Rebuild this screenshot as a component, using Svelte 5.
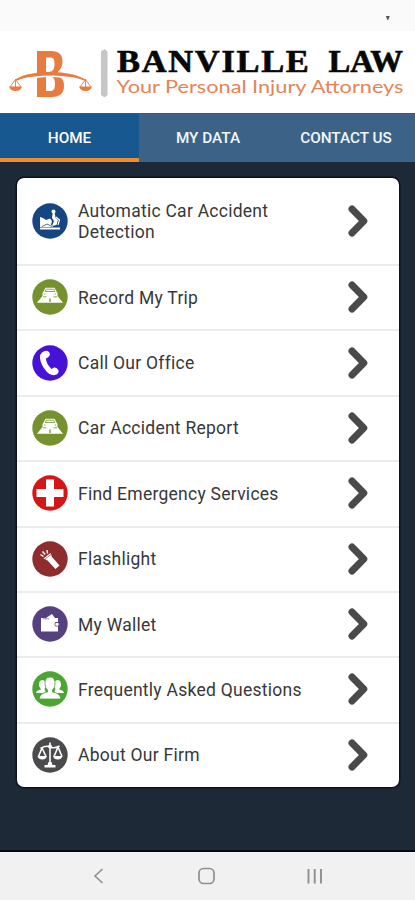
<script>
  const items = [
    { icon: 'crash', color: '#164583', label: 'Automatic Car Accident Detection' },
    { icon: 'car', color: '#75922f', label: 'Record My Trip' },
    { icon: 'phone', color: '#4712d6', label: 'Call Our Office' },
    { icon: 'car', color: '#75922f', label: 'Car Accident Report' },
    { icon: 'cross', color: '#d31616', label: 'Find Emergency Services' },
    { icon: 'torch', color: '#8e2d2d', label: 'Flashlight' },
    { icon: 'wallet', color: '#57407f', label: 'My Wallet' },
    { icon: 'people', color: '#4aa532', label: 'Frequently Asked Questions' },
    { icon: 'scales', color: '#4b4b4d', label: 'About Our Firm' },
  ];
  const tabs = ['HOME', 'MY DATA', 'CONTACT US'];
  let active = $state(0);
</script>

<div class="screen">
  <div class="status">
    <svg width="6" height="6" viewBox="0 0 6 6"><path d="M.8 1h4L3.2 5H2.4z" fill="#555" /></svg>
  </div>

  <header>
    <svg width="415" height="82" viewBox="0 31 415 82" role="img" aria-label="Banville Law">
      <path fill="#e87b40" fill-rule="evenodd" d="M37 51H51C59 51 62.500 55 62.500 61.500C62.500 66 61 69 58 71.500V74H37ZM46 57.500V72H50C53.500 71 54.500 68 54.500 64C54.500 59.500 53.500 57.500 50 57.500Z" />
      <path fill="#e87b40" fill-rule="evenodd" d="M37 77H60C63 79 64 82 64 86C64 93 60 97 52 97H37ZM46 77V91H50C54 91 55 88.500 55 84C55 80 54 77 51 77Z" />
      <path fill="#fff" d="M36 76.500Q50 74.500 64 76.500V78Q50 76 36 78Z" />
      <path fill="#e87b40" d="M15 80Q18 77 27 74.500Q50 69 73 74.500Q82 77 86 80L84 80.500Q76 77 66 76.500Q50 74.500 35 76.500Q25 77 17 80.500Z" />
      <g fill="none" stroke="#e87b40" stroke-width=".9">
        <path d="M15.500 79.500L10 87M15.500 79.500L21 87M15.500 79V87M85.500 79.500L80 87M85.500 79.500L91 87M85.500 79V87" />
      </g>
      <path fill="#e87b40" d="M9 86.500H22Q20.500 91 15.500 91Q10.500 91 9 86.500ZM79 86.500H92Q90.500 91 85.500 91Q80.500 91 79 86.500Z" />
      <path fill="#c6c6c6" d="M101 51.500L104.500 49L107.500 51.500V95L104.500 97.500L101 95Z" />
      <g class="name">
        <text class="spaced" x="117" y="72" textLength="193.500" lengthAdjust="spacingAndGlyphs">BANVILLE</text>
        <text x="328.500" y="72" textLength="74.500" lengthAdjust="spacingAndGlyphs">LAW</text>
      </g>
      <text class="tagline" x="116.500" y="93.300" textLength="287" lengthAdjust="spacingAndGlyphs">Your Personal Injury Attorneys</text>
    </svg>
  </header>

  <nav class="tabs">
    {#each tabs as tab, i}
      <button class:active={active === i} onclick={() => (active = i)}>{tab}</button>
    {/each}
  </nav>

  <main>
    <ul>
      {#each items as item}
        <li>
          <svg class="badge" viewBox="0 0 36 36" width="36" height="36">
            <circle cx="18" cy="18" r="17.700" fill={item.color} />
            {#if item.icon === 'crash'}
              <g fill="#fff">
                <path d="M8 14L11 15L14 17L18 15.500L20 18L19 21.500L21 24H8Z" />
                <circle cx="21.500" cy="8.500" r="2" />
                <path d="M20.700 10L22.700 10L23.500 14.500L26 17L24.500 22L20 23L22 18L20 15Z" />
                <path d="M8 24.500H28V26.500H8Z" />
              </g>
              <path d="M24 14L27.500 17L26 22" fill="none" stroke="#fff" stroke-width="1.200" />
              <path d="M10 23.500L15 21L20 23.500" fill="none" stroke={item.color} stroke-width=".8" />
            {:else if item.icon === 'car'}
              <path fill="#fff" d="M13.500 8.700H22.500L24.500 12.500L25.500 14V17L31 23.700H5L10.500 17V14L11.500 12.500Z" />
              <path fill="none" stroke={item.color} stroke-width=".8" d="M14.300 10.200H21.700L22.800 12.500H13.200ZM12 15H13.500M22.500 15H24M11 17.800H14.500M21.500 17.800H25" />
              <path d="M18 19.500V23" stroke={item.color} stroke-width="1.300" />
            {:else if item.icon === 'phone'}
              <path fill="#fff" d="M10 7.500Q14 4.500 17 7Q19 9.500 16.500 12L14 13.500Q14 18.500 19.500 24L22 22.500Q25 22 26.500 25.500Q27 28.500 24 29.800Q19.500 31.500 14.500 26.500Q8.500 19.500 8 13Q7.800 9 10 7.500Z" />
            {:else if item.icon === 'cross'}
              <path fill="#fff" d="M14 4.500H22V14H31.500V22H22V31.500H14V22H4.500V14H14Z" />
            {:else if item.icon === 'torch'}
              <path fill="#fff" d="M11.500 17.500L18.500 12L20 16L27.500 24.500L23.500 28L15.500 19.500Z" />
              <path stroke="#fff" stroke-width="1.500" d="M11.500 15.500L8.500 13.500M13.200 13.500L10.500 10.500M15.500 12.500L15 9" />
              <path stroke={item.color} stroke-width=".6" d="M12.500 18.500L19 13.500" />
            {:else if item.icon === 'wallet'}
              <path fill="#fff" d="M9 12H14L20 8L23 12H26V16H23.500Q21.500 18 23.500 20.500H26V25.500H9Z" />
              <path fill="none" stroke={item.color} stroke-width=".6" d="M11 12.800H17" />
              <rect x="23.300" y="17" width="3.400" height="2.800" rx="1" fill="#fff" />
            {:else if item.icon === 'people'}
              <path fill="#fff" d="M7 15Q6.500 9 10.500 9Q14 9 14 15L12.500 18L14 22H4Q4.500 19 9 18.500ZM29 15Q29.500 9 25.500 9Q22 9 22 15L23.500 18L22 22H32Q31.500 19 27 18.500Z" />
              <path fill="#fff" stroke={item.color} stroke-width=".8" d="M13 13Q12.500 6 18 6Q23.500 6 23 13Q23 17 20.500 19V21Q28 22 29 28H7Q8 22 15.500 21V19Q13 17 13 13Z" />
            {:else}
              <g fill="none" stroke="#fff" stroke-width="1.600">
                <path d="M18 5.500V28M8.500 11.500Q14 8 18 10Q22 12 27.500 9M10 11L6.500 19.500M10 11L14 19.500M26 10L22 19.500M26 10L30 19.500" />
              </g>
              <path fill="#fff" d="M5.500 19H15Q14 22.500 10.300 22.500Q6.500 22.500 5.500 19ZM21 19H30.500Q29.500 22.500 25.800 22.500Q22 22.500 21 19ZM16.500 25H19.500L20.500 28H23.500V30.500H12.500V28H15.500Z" />
              <circle cx="18" cy="9.500" r="2" fill="#fff" />
            {/if}
          </svg>
          <span>{item.label}</span>
          <svg class="chevron" viewBox="0 0 22 34" width="22" height="34">
            <path d="M5 5L16.800 17L5 29" />
          </svg>
        </li>
      {/each}
    </ul>
  </main>

  <footer>
    <svg width="415" height="48" viewBox="0 852 415 48" fill="none" stroke="#8f8f8f">
      <path d="M102.500 869L95 876L102.500 883" stroke-width="1.600" />
      <rect x="199" y="868.500" width="15" height="15" rx="4.500" stroke-width="1.700" />
      <path d="M308.500 869V883.500M314.700 869V883.500M321 869V883.500" stroke-width="1.900" />
    </svg>
  </footer>
</div>

<style>
  :global(body) { margin: 0; }
  .screen {
    width: 415px;
    height: 900px;
    display: flex;
    flex-direction: column;
    overflow: hidden;
    background: #1e2938;
    font-family: Roboto, sans-serif;
  }
  svg { display: block; flex: none; }
  .status {
    height: 31px;
    flex: none;
    box-sizing: border-box;
    display: flex;
    justify-content: flex-end;
    padding: 15px 24px 0 0;
    background: #fafafa;
  }
  header { height: 82px; flex: none; background: #fff; }
  .name { font: bold 30.500px "Liberation Serif", serif; fill: #080808; stroke: #080808; stroke-width: .6; }
  .spaced { letter-spacing: 1.500px; }
  .tagline { font: 17.500px Lato, sans-serif; fill: #e68356; }
  .tabs {
    height: 49px;
    flex: none;
    display: grid;
    grid-template-columns: 139px 138px 138px;
    background: #3c6387;
  }
  button {
    border: 0;
    border-bottom: 4px solid transparent;
    padding: 4px 0 0;
    margin: 0;
    background: none;
    color: #f2f6fb;
    font: 500 15.300px Roboto, sans-serif;
    border-top: 1px solid #2f5d88;
    white-space: nowrap;
  }
  button.active { background: #175890; border-bottom-color: #ee8b35; color: #fff; }
  main { flex: 1; padding: 16px 16px 0 17px; border-bottom: 2px solid #050912; box-sizing: border-box; }
  ul {
    list-style: none;
    margin: 0;
    padding: 0;
    height: 609px;
    display: flex;
    flex-direction: column;
    background: #fff;
    border-radius: 7px;
    box-shadow: 0 0 0 1.500px #0b121d;
  }
  li {
    flex: 1;
    display: flex;
    align-items: center;
    padding: 0 30px 0 15px;
    border-top: 2px solid #ececec;
    box-sizing: border-box;
  }
  li:first-child { flex: 0 0 86px; border-top: 0; }
  li:not(:first-child) { padding-bottom: 1px; }
  span {
    width: 235px;
    margin: 2px auto 0 10px;
    color: #383838;
    font-size: 17.500px;
    line-height: 21px;
    letter-spacing: .26px;
  }
  .chevron path {
    fill: none;
    stroke: #4a4a4a;
    stroke-width: 7;
    stroke-linecap: round;
    stroke-linejoin: round;
  }
  footer { height: 48px; flex: none; background: #f1f1f1; }
</style>
